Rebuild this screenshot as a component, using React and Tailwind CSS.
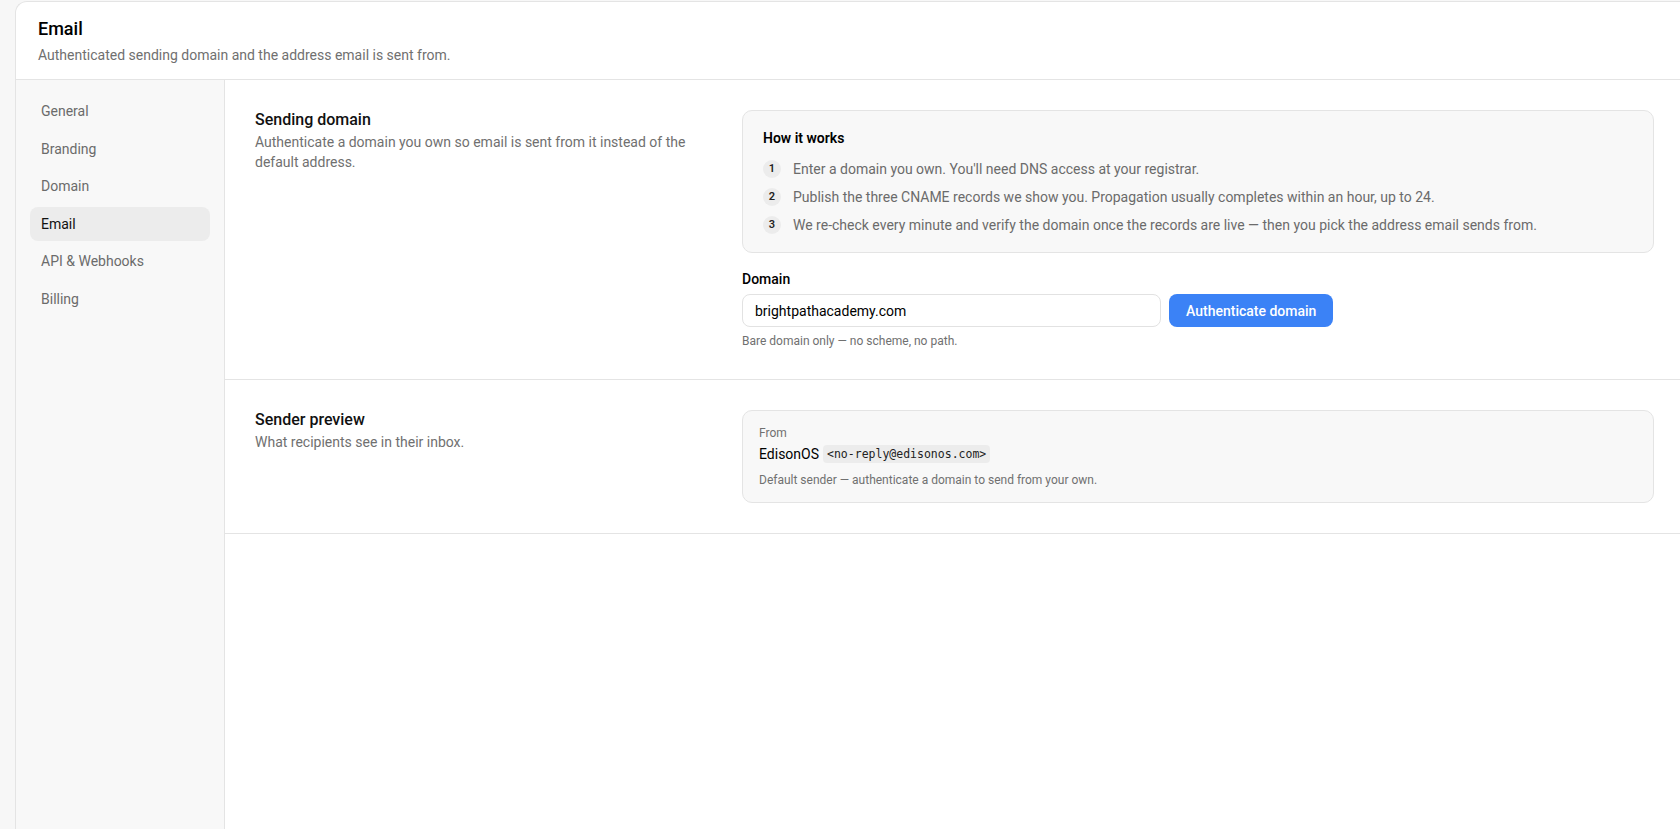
import { useState } from 'react'

const NAV = ['General', 'Branding', 'Domain', 'Email', 'API & Webhooks', 'Billing']

const STEPS = [
  "Enter a domain you own. You'll need DNS access at your registrar.",
  'Publish the three CNAME records we show you. Propagation usually completes within an hour, up to 24.',
  'We re-check every minute and verify the domain once the records are live — then you pick the address email sends from.',
]

function SectionIntro({ title, text }) {
  return (
    <div>
      <h3 className="text-[16px] font-medium leading-5 text-[#111]">{title}</h3>
      <p className="mt-0.5 text-sm leading-5 text-[#707070]">{text}</p>
    </div>
  )
}

export default function App() {
  const [domain, setDomain] = useState('brightpathacademy.com')

  return (
    <div className="min-h-screen bg-[#f7f7f7] pl-[15px] pt-px font-['Roboto','Noto_Sans',sans-serif] text-[#111]">
      <div className="flex min-h-[828px] flex-col rounded-tl-xl border-l border-t border-[#e4e4e4] bg-white">
        <header className="border-b border-[#e4e4e4] px-[22px] pb-[14px] pt-[13px]">
          <h1 className="text-lg font-medium leading-7 text-black">Email</h1>
          <p className="mt-[2px] text-sm leading-5 text-[#707070]">Authenticated sending domain and the address email is sent from.</p>
        </header>

        <div className="flex flex-1">
          <aside className="w-[209px] shrink-0 border-r border-[#e4e4e4] bg-[#f8f8f8] px-3.5 pt-[14px]">
            <nav className="flex flex-col gap-[3.5px]">
              {NAV.map((item) => (
                <div
                  key={item}
                  className={
                    item === 'Email'
                      ? 'flex h-[34px] items-center rounded-lg bg-[#ececec] px-[11px] text-sm text-[#111]'
                      : 'flex h-[34px] items-center rounded-lg px-[11px] text-sm text-[#6b6b6b]'
                  }
                >
                  {item}
                </div>
              ))}
            </nav>
          </aside>

          <main className="flex-1">
            <section className="grid grid-cols-[440px_1fr] gap-[47px] border-b border-[#e4e4e4] pb-[30px] pl-[30px] pr-[26px] pt-[30px]">
              <SectionIntro
                title="Sending domain"
                text="Authenticate a domain you own so email is sent from it instead of the default address."
              />
              <div>
                <div className="rounded-[10px] border border-[#e4e4e4] bg-[#f8f8f8] px-5 py-[17px]">
                  <h4 className="text-sm font-semibold leading-5 text-black">How it works</h4>
                  <ol className="mt-[11px] flex flex-col gap-2">
                    {STEPS.map((s, i) => (
                      <li key={i} className="flex h-5 items-center gap-3 text-sm text-[#6b6b6b]">
                        <span className="flex h-[18px] w-[18px] shrink-0 items-center justify-center rounded-full bg-[#ececec] text-[11px] font-semibold text-[#222]">
                          {i + 1}
                        </span>
                        <span>{s}</span>
                      </li>
                    ))}
                  </ol>
                </div>

                <label className="mb-[5px] mt-4 block text-sm font-medium leading-5 text-black">Domain</label>
                <div className="flex gap-2">
                  <input
                    value={domain}
                    onChange={(e) => setDomain(e.target.value)}
                    className="h-[33px] w-[419px] rounded-lg border border-[#e2e2e2] bg-white px-3 text-sm text-black outline-none"
                  />
                  <button className="h-[33px] rounded-lg bg-[#3b82f6] px-[17px] text-sm font-medium text-white">
                    Authenticate domain
                  </button>
                </div>
                <p className="mt-[6px] text-xs leading-4 text-[#707070]">Bare domain only — no scheme, no path.</p>
              </div>
            </section>

            <section className="grid grid-cols-[440px_1fr] gap-[47px] border-b border-[#e4e4e4] py-[30px] pl-[30px] pr-[26px]">
              <SectionIntro title="Sender preview" text="What recipients see in their inbox." />
              <div className="rounded-[10px] border border-[#e4e4e4] bg-[#f8f8f8] px-4 pb-[14px] pt-[14px]">
                <div className="text-xs leading-4 text-[#707070]">From</div>
                <div className="mt-0.5 flex h-[21px] items-center gap-1 text-sm text-black">
                  <span>EdisonOS</span>
                  <code className="rounded bg-[#ececec] px-1 font-['DejaVu_Sans_Mono','Liberation_Mono',monospace] text-[11.5px] leading-[18px] text-[#222]">
                    {'<no-reply@edisonos.com>'}
                  </code>
                </div>
                <p className="mt-2 text-xs leading-4 text-[#707070]">Default sender — authenticate a domain to send from your own.</p>
              </div>
            </section>
          </main>
        </div>
      </div>
    </div>
  )
}
